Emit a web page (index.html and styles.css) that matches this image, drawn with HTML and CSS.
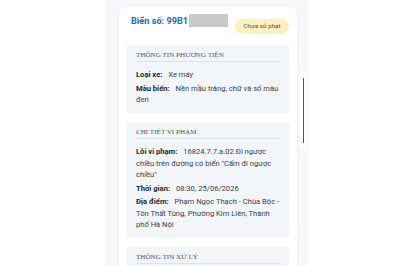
FILE: index.html
```html
<!DOCTYPE html>
<html lang="vi">

<head>
    <meta charset="UTF-8">
    <title>Tra cứu phạt nguội</title>
    <link rel="stylesheet" href="styles.css">
</head>

<body>

    <div class="screen">
        <div class="card">
            <div class="card-head">
                <div class="plate">
                    <span>Biển số: 99B1</span>
                    <span class="mask"></span>
                </div>
                <span class="badge">Chưa xử phạt</span>
            </div>

            <div class="section">
                <div class="section-title">Thông tin phương tiện</div>
                <div class="row"><b>Loại xe:</b> <span>Xe máy</span></div>
                <div class="row"><b>Màu biển:</b> <span>Nền mầu trắng, chữ và số màu đen</span></div>
            </div>

            <div class="section">
                <div class="section-title">Chi tiết vi phạm</div>
                <div class="row"><b>Lỗi vi phạm:</b> <span>16824.7.7.a.02.Đi ngược chiều trên đường có biển "Cấm đi ngược chiều"</span></div>
                <div class="row"><b>Thời gian:</b> <span>08:30, 25/06/2026</span></div>
                <div class="row"><b>Địa điểm:</b> <span>Phạm Ngọc Thạch - Chùa Bộc - Tôn Thất Tùng, Phường Kim Liên, Thành phố Hà Nội</span></div>
            </div>

            <div class="section">
                <div class="section-title">Thông tin xử lý</div>
            </div>
        </div>
        <div class="scroll-thumb"></div>
    </div>

</body>

</html>
```

FILE: styles.css
```css
* {
    margin: 0;
    padding: 0;
    box-sizing: border-box;
}

body {
    background: #ffffff;
    font-family: Roboto, "Noto Sans", sans-serif;
    overflow: hidden;
}

.screen {
    position: relative;
    margin-left: 108px;
    width: 198px;
    height: 266px;
    padding: 7px 9px 0 11px;
    background: #f5f7fa;
    box-shadow: 0 0 6px rgba(220, 226, 234, 0.6);
    overflow: hidden;
}

.card {
    background: #ffffff;
    border-radius: 6px;
    padding: 7px 8px 0 7px;
    height: 270px;
    box-shadow: 0 0 3px rgba(200, 208, 218, 0.35);
}

.card-head {
    display: flex;
    justify-content: space-between;
    align-items: flex-start;
    height: 20px;
    padding-left: 5px;
    margin-bottom: 11px;
}

.plate {
    display: flex;
    align-items: center;
    gap: 1px;
    font-size: 9.2px;
    line-height: 13px;
    font-weight: 700;
    color: #1f69ad;
    height: 13px;
}

.mask {
    display: inline-block;
    width: 39px;
    height: 13px;
    background: #c9c9c9;
}

.badge {
    margin-top: 5px;
    width: 54px;
    height: 15px;
    line-height: 15px;
    text-align: center;
    border-radius: 8px;
    background: #fbf0c2;
    color: #5e5224;
    font-size: 6.2px;
}

.section {
    background: #f2f5f9;
    border-radius: 3px;
    padding: 5px 9px 7px 10px;
    margin-bottom: 9.5px;
}

.section-title {
    font-family: "Liberation Serif", "DejaVu Serif", serif;
    text-transform: uppercase;
    font-size: 7.1px;
    color: #50565e;
    height: 12px;
    line-height: 10px;
    border-bottom: 1px solid #dfe4ea;
    margin-bottom: 7px;
}

.row {
    font-size: 7.6px;
    line-height: 11.5px;
    color: #3b4148;
    margin-bottom: 2px;
}

.row:last-child {
    margin-bottom: 0;
}

.row b {
    color: #22272d;
    margin-right: 4px;
}

.scroll-thumb {
    position: absolute;
    right: -1px;
    top: 72px;
    width: 8px;
    height: 78px;
    background: #fdfdfe;
}

.scroll-thumb::after {
    content: "";
    position: absolute;
    left: 4px;
    top: 6px;
    width: 1px;
    height: 65px;
    background: #555;
}
```
